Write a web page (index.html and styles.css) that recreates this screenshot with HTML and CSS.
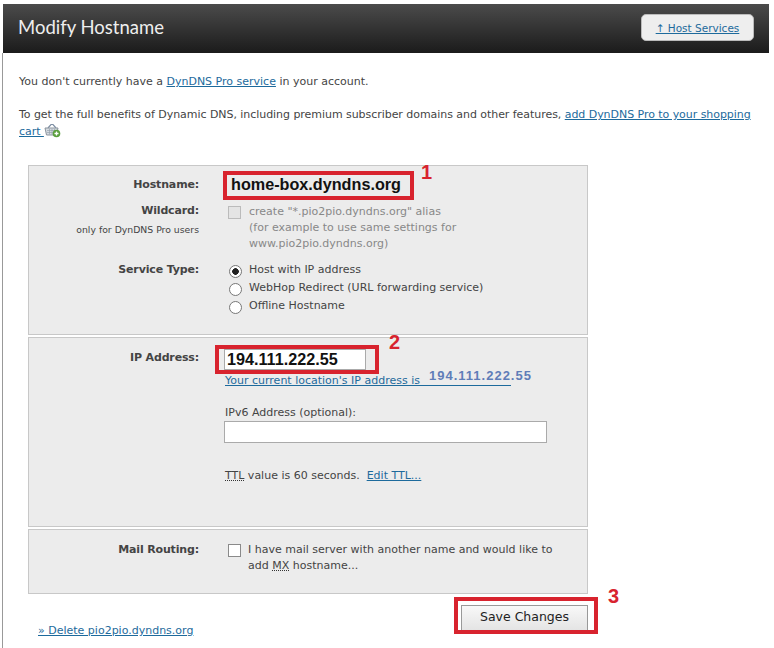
FILE: index.html
```html
<!DOCTYPE html>
<html lang="en">
<head>
<meta charset="utf-8">
<title>Modify Hostname</title>
<link rel="stylesheet" href="styles.css">
</head>
<body>
<div class="page">
  <header class="topbar">
    <h1 class="title">Modify Hostname</h1>
    <div class="host-services"><a href="#">↑ Host Services</a></div>
  </header>
  <main class="content">
    <p class="intro-one">You don't currently have a <a href="#">DynDNS Pro service</a> in your account.</p>
    <p class="intro-two">To get the full benefits of Dynamic DNS, including premium subscriber domains and other features, <a href="#">add DynDNS Pro to your shopping</a> <a href="#">cart </a><svg class="cart" width="17" height="15" viewBox="0 0 17 15"><path d="M4 5 L7 1.5 H9 L12 5" fill="none" stroke="#7d8ea3" stroke-width="1.2"/><path d="M1 5 H14 L12.5 12 H2.5 Z" fill="#d5dae0" stroke="#8a949e"/><path d="M3 7.5 H12 M3 9.5 H12 M5.5 6 V11.5 M8 6 V11.5 M10.5 6 V11.5" stroke="#98a2ac" stroke-width=".7"/><circle cx="12.5" cy="10.5" r="3.8" fill="#5a9e3c"/><path d="M12.5 8.5 V12.5 M10.5 10.5 H14.5" stroke="#fff" stroke-width="1.3"/></svg></p>

    <section class="panel panel-host">
      <div class="row row-hostname">
        <div class="label">Hostname:</div>
        <div class="hostname">home-box.dyndns.org</div>
      </div>
      <div class="row row-wildcard">
        <div class="label">Wildcard:<small>only for DynDNS Pro users</small></div>
        <label class="choice disabled"><input type="checkbox" class="box" disabled><span>create "*.pio2pio.dyndns.org" alias<br>(for example to use same settings for<br>www.pio2pio.dyndns.org)</span></label>
      </div>
      <div class="row row-service">
        <div class="label">Service Type:</div>
        <div class="radios">
          <label class="choice"><input type="radio" class="dot" name="t" checked><span>Host with IP address</span></label>
          <label class="choice"><input type="radio" class="dot" name="t"><span>WebHop Redirect (URL forwarding service)</span></label>
          <label class="choice"><input type="radio" class="dot" name="t"><span>Offline Hostname</span></label>
        </div>
      </div>
    </section>

    <section class="panel panel-ip">
      <div class="row">
        <div class="label">IP Address:</div>
        <div class="ip-fields">
          <div class="ip-value">194.111.222.55</div>
          <a class="ip-link" href="#">Your current location's IP address is</a>
          <div class="v6-label">IPv6 Address (optional):</div>
          <div class="v6-input"></div>
          <div class="ttl"><abbr>TTL</abbr> value is 60 seconds.&nbsp; <a href="#">Edit TTL...</a></div>
        </div>
      </div>
    </section>

    <section class="panel panel-mail">
      <div class="row">
        <div class="label">Mail Routing:</div>
        <label class="choice"><input type="checkbox" class="box mail-box"><span>I have mail server with another name and would like to<br>add <abbr>MX</abbr> hostname...</span></label>
      </div>
    </section>

    <div class="actions">
      <a class="delete" href="#">» Delete pio2pio.dyndns.org</a>
      <button class="save" type="button">Save Changes</button>
    </div>
  </main>

  <div class="mark mark-one"></div><div class="num num-one">1</div>
  <div class="mark mark-two"></div><div class="num num-two">2</div>
  <div class="mark mark-three"></div><div class="num num-three">3</div>
  <div class="ip-overlay">194.111.222.55</div>
</div>
</body>
</html>
```

FILE: styles.css
```css
* { box-sizing: border-box; }
html, body { margin: 0; padding: 0; background: #fff; height: 648px; overflow: hidden; }
body { font-family: "DejaVu Sans", Verdana, sans-serif; font-size: 11px; color: #444; }
a { color: #1d6a9c; text-decoration: underline; }
.page { position: relative; width: 774px; height: 648px; padding-top: 4px; overflow: hidden; }
.topbar {
  margin-left: 3px; width: 766px; height: 49px;
  background: linear-gradient(#4b4b4b, #1b1b1b);
  display: flex; align-items: center; justify-content: space-between;
  padding: 0 15px;
}
.title { margin: -3px 0 0; font-family: Lato, sans-serif; font-weight: 400; font-size: 18.5px; color: #eee; }
.host-services {
  width: 113px; height: 27px; margin-top: -2px;
  background: #eee; border: 1px solid #bbb; border-radius: 5px;
  display: flex; align-items: center; justify-content: center;
  font-size: 10.5px;
}
.content { margin-left: 2px; border-left: 1px solid #999; padding-left: 16px; height: 595px; }
.content p { margin: 0; line-height: 16px; width: 740px; }
.intro-one { padding-top: 21px; }
.content .intro-two { padding-top: 17px; letter-spacing: -0.05px; }
.cart { vertical-align: -3px; }
.panel { width: 560px; margin-left: 9px; background: #ececec; border: 1px solid #c8c8c8; }
.panel-host { margin-top: 25px; height: 170px; padding-top: 11px; }
.panel-ip { margin-top: 2px; height: 190px; padding-top: 12px; }
.panel-mail { margin-top: 2px; height: 65px; padding-top: 12px; }
.row { display: grid; grid-template-columns: 170px 1fr; column-gap: 26px; line-height: 16px; }
.label { text-align: right; font-weight: 700; color: #444; letter-spacing: -0.15px; }
.label small { display: block; font-size: 9.3px; font-weight: 400; line-height: 14px; margin-top: 4px; letter-spacing: 0; }
.row-hostname { height: 26px; }
.hostname { font-family: "Liberation Sans", Arial, sans-serif; font-weight: 700; font-size: 16.2px; line-height: 18px; color: #111; padding-left: 6px; margin-top: -2px; }
.row-wildcard { height: 59px; }
.choice { display: flex; align-items: flex-start; }
.choice span { display: block; }
.disabled { color: #888; }
.disabled span { padding-top: 1px; }
.box, .dot { appearance: none; margin: 0; flex: none; background: #fff; }
.box { width: 13px; height: 13px; border: 1px solid #8a8a8a; margin: 3px 8px 0 3px; }
.box:disabled { background: #e4e4e4; border-color: #bbb; }
.mail-box { margin-right: 7px; margin-top: 2px; }
.dot { width: 13px; height: 13px; border: 1px solid #777; border-radius: 50%; margin: 3px 7px 0 4px; }
.dot:checked { background: radial-gradient(circle, #222 0, #222 3px, #fff 3.6px); }
.radios .choice { height: 18px; }
.ip-value {
  width: 142px; height: 21px; margin-left: -1px; margin-top: -1px;
  padding: 0 2px; background: #fff; border: 1px solid #aaa;
  font-family: "Liberation Sans", Arial, sans-serif; font-weight: 700; font-size: 16.2px; line-height: 19px; color: #111;
}
.ip-link { display: block; width: 286px; height: 16px; padding-top: 3px; line-height: 16px; text-decoration: none; border-bottom: 1px solid #1d6a9c; }
.v6-label { margin-top: 19px; }
.v6-input { width: 323px; height: 22px; background: #fff; border: 1px solid #aaa; margin-left: -1px; }
.ttl { margin-top: 25px; }
abbr { text-decoration: underline dotted #333; }
.actions {
  width: 560px; margin-left: 9px; height: 54px;
  display: flex; justify-content: space-between; align-items: flex-start;
}
.delete { margin: 30px 0 0 10px; }
.save {
  width: 127px; height: 26px; margin-top: 11px;
  font-family: "DejaVu Sans", Verdana, sans-serif; font-size: 12.5px; color: #222;
  background: linear-gradient(#f8f8f8, #e4e4e4); border: 1px solid #999; padding: 0 0 3px;
}
.mark { position: absolute; border: 4px solid #d8232e; }
.mark-one { left: 223px; top: 171px; width: 191px; height: 29px; }
.mark-two { left: 215px; top: 345px; width: 164px; height: 29px; }
.mark-three { left: 454px; top: 597px; width: 144px; height: 37px; }
.num { position: absolute; font-family: "Liberation Sans", Arial, sans-serif; font-weight: 700; font-size: 20px; line-height: 20px; color: #d8232e; }
.num-one { left: 421px; top: 162px; }
.num-two { left: 389px; top: 332px; }
.num-three { left: 608px; top: 586px; }
.ip-overlay { position: absolute; left: 429px; top: 369px; font-family: "Liberation Sans", Arial, sans-serif; font-weight: 700; font-size: 13px; letter-spacing: 1px; line-height: 14px; color: #5f7db8; }
```
